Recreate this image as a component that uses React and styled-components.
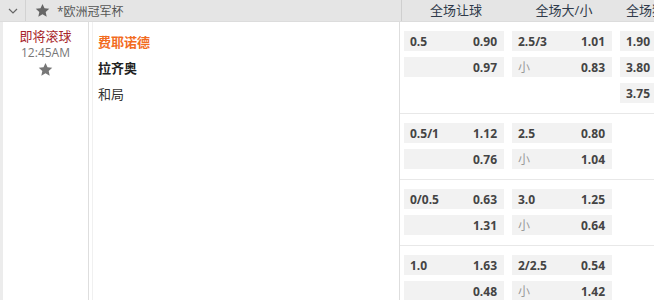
import React from "react";
import styled, { createGlobalStyle } from "styled-components";

const GlobalStyle = createGlobalStyle`
  body {
    margin: 0;
    background: #fff;
    font-family: "Open Sans", "Noto Sans CJK SC", sans-serif;
  }
`;

const blocks = [
  {
    rows: [
      ["0.5", "0.90", "2.5/3", "1.01", "1.90"],
      ["", "0.97", "小", "0.83", "3.80"],
      [null, null, null, null, "3.75"],
    ],
  },
  {
    rows: [
      ["0.5/1", "1.12", "2.5", "0.80"],
      ["", "0.76", "小", "1.04"],
    ],
  },
  {
    rows: [
      ["0/0.5", "0.63", "3.0", "1.25"],
      ["", "1.31", "小", "0.64"],
    ],
  },
  {
    rows: [
      ["1.0", "1.63", "2/2.5", "0.54"],
      ["", "0.48", "小", "1.42"],
    ],
  },
];

function Star({ size = 14, color = "#6f6f6f" }) {
  return (
    <svg width={size} height={size} viewBox="0 0 24 24">
      <path
        fill={color}
        d="M12 1.5l3.2 7 7.6.8-5.7 5.1 1.6 7.5L12 18l-6.7 3.9 1.6-7.5L1.2 9.3l7.6-.8z"
      />
    </svg>
  );
}

export default function App() {
  return (
    <Page>
      <GlobalStyle />
      <Header>
        <Toggle>
          <svg width="10" height="6" viewBox="0 0 10 6">
            <path d="M1 1l4 4 4-4" fill="none" stroke="#666" strokeWidth="1.2" />
          </svg>
        </Toggle>
        <League>
          <Star size={15} color="#666" />
          <span>*欧洲冠军杯</span>
        </League>
        <HeadCols>
          <HeadCol>全场让球</HeadCol>
          <HeadCol>全场大/小</HeadCol>
          <HeadCol $left>全场独赢</HeadCol>
        </HeadCols>
      </Header>
      <Body>
        <Strip />
        <TimeCol>
          <Status>即将滚球</Status>
          <Clock>12:45AM</Clock>
          <StarWrap>
            <Star size={15} color="#777" />
          </StarWrap>
        </TimeCol>
        <TeamCol>
          <Team $color="#f26c1f" $bold>费耶诺德</Team>
          <Team $color="#222" $bold>拉齐奥</Team>
          <Team $color="#333">和局</Team>
        </TeamCol>
        <OddsCol>
          {blocks.map((b, i) => (
            <Block key={i}>
              {b.rows.map((r, j) => (
                <OddsRow key={j}>
                  {r[0] !== null ? (
                    <Cell>
                      <span>{r[0]}</span>
                      <Price>{r[1]}</Price>
                    </Cell>
                  ) : (
                    <Empty />
                  )}
                  {r[2] !== null ? (
                    <Cell>
                      {r[2] === "小" ? <Under>小</Under> : <span>{r[2]}</span>}
                      <Price>{r[3]}</Price>
                    </Cell>
                  ) : (
                    <Empty />
                  )}
                  {r[4] ? (
                    <Cell>
                      <span>{r[4]}</span>
                    </Cell>
                  ) : (
                    <Empty />
                  )}
                </OddsRow>
              ))}
            </Block>
          ))}
        </OddsCol>
      </Body>
    </Page>
  );
}

const Page = styled.div`
  width: 654px;
  height: 300px;
  overflow: hidden;
`;

const Header = styled.div`
  display: flex;
  height: 21px;
  background: #e5e5e5;
  border-bottom: 1px solid #dcdcdc;
`;

const Toggle = styled.div`
  width: 25px;
  flex-shrink: 0;
  display: flex;
  align-items: center;
  justify-content: center;
  border-right: 1px solid #d2d2d2;
`;

const League = styled.div`
  width: 376px;
  flex-shrink: 0;
  display: flex;
  align-items: center;
  gap: 7px;
  padding-left: 9px;
  box-sizing: border-box;
  font-size: 12px;
  color: #555;
  border-right: 1px solid #cfcfcf;
`;

const HeadCols = styled.div`
  display: flex;
  gap: 8px;
  padding-left: 4px;
`;

const HeadCol = styled.div`
  width: 100px;
  flex-shrink: 0;
  box-sizing: border-box;
  padding-left: ${(p) => (p.$left ? "4px" : "0")};
  text-align: ${(p) => (p.$left ? "left" : "center")};
  white-space: nowrap;
  font-size: 13px;
  line-height: 21px;
  color: #2f3a4a;
`;

const Body = styled.div`
  display: flex;
`;

const Strip = styled.div`
  width: 3px;
  flex-shrink: 0;
  background: #ececec;
`;

const TimeCol = styled.div`
  width: 85px;
  flex-shrink: 0;
  display: flex;
  flex-direction: column;
  align-items: center;
  padding-top: 6px;
  border-right: 1px solid #dedede;
`;

const Status = styled.div`
  font-size: 13px;
  line-height: 17px;
  color: #a8262b;
`;

const Clock = styled.div`
  font-size: 12px;
  line-height: 15px;
  color: #777;
`;

const StarWrap = styled.div`
  margin-top: 2px;
  line-height: 0;
`;

const TeamCol = styled.div`
  width: 301px;
  flex-shrink: 0;
  padding: 9px 0 0 5px;
  margin-left: 3px;
  border-left: 1px solid #f0f0f0;
  border-right: 1px solid #dedede;
`;

const Team = styled.div`
  height: 26px;
  line-height: 22px;
  font-size: 13px;
  font-weight: ${(p) => (p.$bold ? 700 : 400)};
  color: ${(p) => p.$color};
`;

const OddsCol = styled.div`
  flex: 1;
  min-width: 0;
  display: flex;
  flex-direction: column;
`;

const Block = styled.div`
  display: flex;
  flex-direction: column;
  gap: 6px;
  padding: 9px 0 10px 4px;
  border-bottom: 1px solid #e8e8e8;
`;

const OddsRow = styled.div`
  display: flex;
  gap: 8px;
`;

const Cell = styled.div`
  width: 100px;
  height: 20px;
  flex-shrink: 0;
  box-sizing: border-box;
  padding: 0 7px 0 6px;
  display: flex;
  align-items: center;
  justify-content: space-between;
  background: #f2f2f2;
  font-size: 12px;
  font-weight: 700;
  color: #444;
`;

const Empty = styled.div`
  width: 100px;
  height: 20px;
  flex-shrink: 0;
`;

const Price = styled.span`
  margin-left: auto;
`;

const Under = styled.span`
  font-weight: 400;
  color: #999;
`;
